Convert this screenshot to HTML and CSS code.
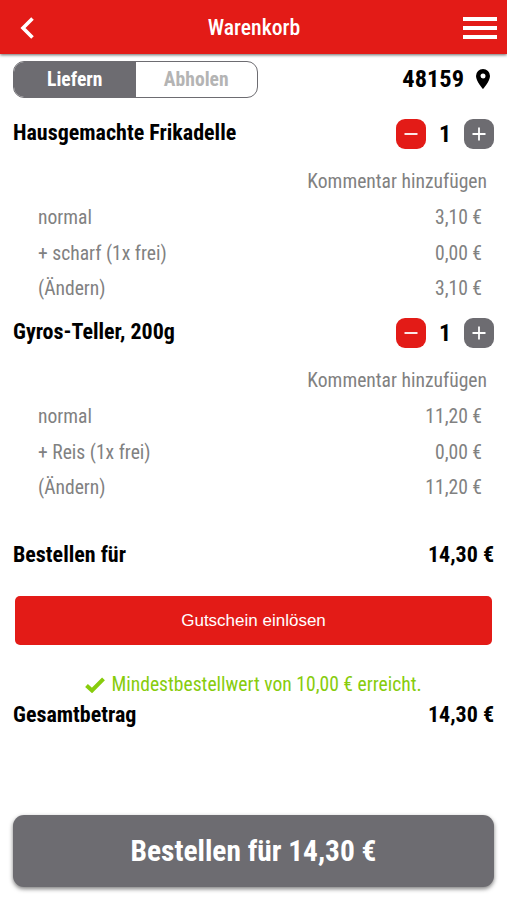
FILE: index.html
```html
<!DOCTYPE html>
<html lang="de">
<head>
    <meta charset="UTF-8" />
    <meta name="viewport" content="width=device-width, initial-scale=1.0"/>
    <title>Warenkorb</title>
    <link rel="stylesheet" href="styles.css">
</head>
<body>
<header class="topbar">
    <svg class="back" viewBox="0 0 14 22"><path d="M12.5 1.5 L3 11 L12.5 20.5"/></svg>
    <h1>Warenkorb</h1>
    <div class="menu"><span></span><span></span><span></span></div>
</header>

<main class="cart">
    <div class="delivery">
        <div class="toggle">
            <div class="toggle-option active">Liefern</div>
            <div class="toggle-option">Abholen</div>
        </div>
        <div class="zip">
            <span>48159</span>
            <svg class="pin" viewBox="0 0 14 20"><path fill-rule="evenodd" d="M7 0a7 7 0 0 0-7 7c0 5.2 7 13 7 13s7-7.800 7-13a7 7 0 0 0-7-7zm0 4.500a2.500 2.500 0 1 1 0 5a2.500 2.500 0 0 1 0-5z"/></svg>
        </div>
    </div>

    <section class="item">
        <div class="item-head">
            <h2>Hausgemachte Frikadelle</h2>
            <div class="quantity">
                <button class="qty-btn minus"><svg viewBox="0 0 30 30"><path d="M8.500 15h13"/></svg></button>
                <span>1</span>
                <button class="qty-btn plus"><svg viewBox="0 0 30 30"><path d="M8.500 15h13M15 8.500v13"/></svg></button>
            </div>
        </div>
        <div class="comment">Kommentar hinzufügen</div>
        <div class="row"><span>normal</span><span>3,10 €</span></div>
        <div class="row"><span>+ scharf (1x frei)</span><span>0,00 €</span></div>
        <div class="row"><span>(Ändern)</span><span>3,10 €</span></div>
    </section>

    <section class="item">
        <div class="item-head">
            <h2>Gyros-Teller, 200g</h2>
            <div class="quantity">
                <button class="qty-btn minus"><svg viewBox="0 0 30 30"><path d="M8.500 15h13"/></svg></button>
                <span>1</span>
                <button class="qty-btn plus"><svg viewBox="0 0 30 30"><path d="M8.500 15h13M15 8.500v13"/></svg></button>
            </div>
        </div>
        <div class="comment">Kommentar hinzufügen</div>
        <div class="row"><span>normal</span><span>11,20 €</span></div>
        <div class="row"><span>+ Reis (1x frei)</span><span>0,00 €</span></div>
        <div class="row"><span>(Ändern)</span><span>11,20 €</span></div>
    </section>

    <div class="total subtotal"><span>Bestellen für</span><span>14,30 €</span></div>
    <button class="voucher">Gutschein einlösen</button>
    <div class="minimum">
        <svg class="check" viewBox="0 0 20 16"><path d="M1.500 8.500L7 13.500L18.500 1.800"/></svg>
        <span>Mindestbestellwert von 10,00 € erreicht.</span>
    </div>
    <div class="total"><span>Gesamtbetrag</span><span>14,30 €</span></div>

    <button class="order">Bestellen für 14,30 €</button>
</main>
</body>
</html>
```
FILE: styles.css
```css
:root {
    --red: #e31b17;
    --gray: #6d6c71;
    --text-light: #818181;
    --green: #87cc0c;
}

* {
    box-sizing: border-box;
}

body {
    margin: 0;
    font-family: 'Roboto Condensed', Roboto, sans-serif;
    font-stretch: 75%;
    background: #fff;
    color: #000;
}

h1, h2 {
    margin: 0;
}

button {
    border: none;
    padding: 0;
    color: #fff;
    font-family: inherit;
    font-stretch: inherit;
}

.topbar {
    display: flex;
    align-items: center;
    justify-content: space-between;
    height: 54px;
    padding: 0 10px 0 20px;
    background: var(--red);
    box-shadow: 0 1px 3px rgba(0, 0, 0, 0.6);
    color: #fff;
}

.topbar h1 {
    margin-left: 11px;
    font-size: 21.7px;
    font-weight: 500;
}

.back {
    width: 14px;
    height: 22px;
    margin-top: 2px;
    fill: none;
    stroke: #fff;
    stroke-width: 3.6;
}

.menu {
    display: flex;
    flex-direction: column;
    gap: 5px;
    width: 34px;
    margin-top: 2px;
}

.menu span {
    height: 4px;
    background: #fff;
}

.cart {
    padding: 7px 13px 13px;
}

.delivery {
    display: flex;
    justify-content: space-between;
    height: 50px;
}

.toggle {
    display: flex;
    width: 245px;
    height: 37px;
    border: 1px solid var(--gray);
    border-radius: 11px;
    overflow: hidden;
}

.toggle-option {
    flex: 1;
    line-height: 35px;
    text-align: center;
    font-size: 19.6px;
    font-weight: 700;
    color: #b4b4b4;
}

.toggle-option.active {
    background: var(--gray);
    color: #fff;
}

.zip {
    display: flex;
    align-items: center;
    gap: 12px;
    height: 35px;
    padding-right: 4px;
    font-size: 24.4px;
    font-weight: 700;
}

.pin {
    width: 14px;
    height: 20px;
}

.item {
    height: 199px;
}

.item-head {
    display: flex;
    align-items: center;
    justify-content: space-between;
    height: 46px;
    margin-bottom: 6px;
}

.item-head h2 {
    margin-top: -4px;
    font-size: 22px;
}

.quantity {
    display: flex;
    align-items: center;
    justify-content: space-between;
    width: 98px;
    font-size: 24px;
    font-weight: 700;
}

.qty-btn {
    width: 30px;
    height: 30px;
    border-radius: 9px;
}

.qty-btn svg {
    display: block;
    fill: none;
    stroke: #fff;
    stroke-width: 1.8;
}

.minus {
    background: var(--red);
}

.plus {
    background: var(--gray);
}

.comment {
    padding-right: 7px;
    line-height: 37px;
    text-align: right;
    font-size: 19.6px;
    color: var(--text-light);
}

.row {
    display: flex;
    justify-content: space-between;
    padding: 0 12px 0 25px;
    line-height: 35.5px;
    font-size: 19.6px;
    color: var(--text-light);
}

.total {
    display: flex;
    justify-content: space-between;
    line-height: 30px;
    font-size: 22px;
    font-weight: 700;
}

.subtotal {
    margin-top: 31px;
}

.voucher {
    display: block;
    width: 477px;
    height: 49px;
    margin: 26px auto 24px;
    border-radius: 5px;
    background: var(--red);
    font-family: 'Liberation Sans', Arial, sans-serif;
    font-size: 17px;
}

.minimum {
    display: flex;
    align-items: center;
    justify-content: center;
    gap: 6px;
    line-height: 31px;
    font-size: 19.6px;
    color: var(--green);
}

.check {
    width: 20px;
    height: 16px;
    fill: none;
    stroke: var(--green);
    stroke-width: 4;
}

.order {
    display: block;
    width: 100%;
    height: 72px;
    margin-top: 85px;
    border-radius: 11px;
    background: var(--gray);
    box-shadow: 0 2px 4px rgba(0, 0, 0, 0.5);
    font-size: 29.4px;
    font-weight: 700;
}
```
